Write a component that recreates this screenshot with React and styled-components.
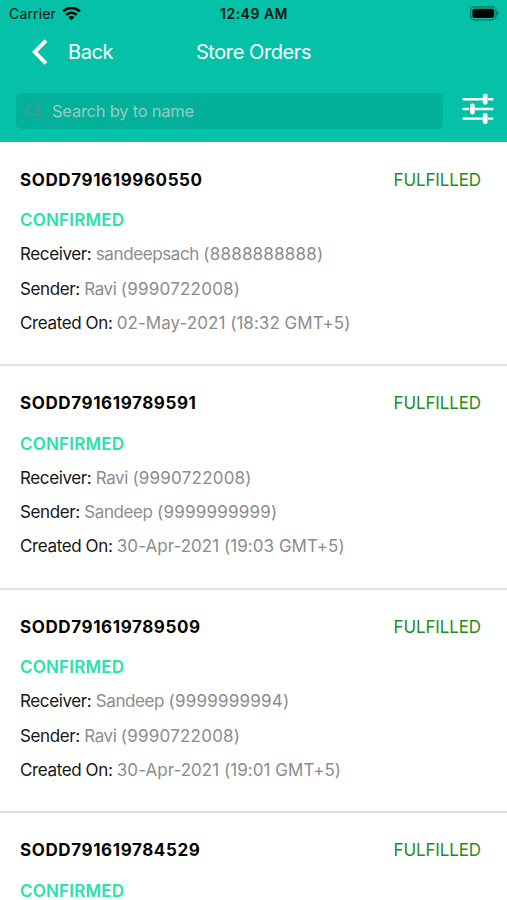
import React from "react";
import styled, { createGlobalStyle } from "styled-components";

const orders = [
  {
    id: "SODD791619960550",
    receiver: { name: "sandeepsach", phone: "8888888888" },
    sender: { name: "Ravi", phone: "9990722008" },
    created: "02-May-2021 (18:32 GMT+5)",
  },
  {
    id: "SODD791619789591",
    receiver: { name: "Ravi", phone: "9990722008" },
    sender: { name: "Sandeep", phone: "9999999999" },
    created: "30-Apr-2021 (19:03 GMT+5)",
  },
  {
    id: "SODD791619789509",
    receiver: { name: "Sandeep", phone: "9999999994" },
    sender: { name: "Ravi", phone: "9990722008" },
    created: "30-Apr-2021 (19:01 GMT+5)",
  },
  {
    id: "SODD791619784529",
  },
];

function BatteryIcon() {
  return (
    <svg width="29" height="15" viewBox="0 0 29 15">
      <rect x="0.6" y="0.8" width="25.4" height="13" rx="3.8" fill="none" stroke="#000" strokeOpacity="0.42" strokeWidth="1.2" />
      <rect x="2.4" y="2.7" width="21.8" height="9.3" rx="2" fill="#000" />
      <path d="M27.2 5v4.6c2-.7 2-3.9 0-4.6z" fill="#000" fillOpacity="0.45" />
    </svg>
  );
}

function WifiIcon() {
  return (
    <svg width="19" height="14" viewBox="0 0 19 14" fill="none" stroke="#000" strokeWidth="2.6">
      <path d="M1.2 4.4C5.8-.2 13.2-.2 17.8 4.4" />
      <path d="M4.2 7.9c3-2.9 7.6-2.9 10.6 0" />
      <path d="M9.5 13.3 6.4 10.2c1.8-1.6 4.4-1.6 6.2 0z" fill="#000" stroke="none" />
    </svg>
  );
}

function BackIcon() {
  return (
    <svg width="16" height="26" viewBox="0 0 16 26" fill="none">
      <path d="M14 1.6 2.8 13 14 24.4" stroke="#fff" strokeWidth="3.9" />
    </svg>
  );
}

function SearchIcon() {
  return (
    <svg width="18" height="18" viewBox="0 0 18 18" fill="none" stroke="#5b9488" strokeWidth="1.4">
      <circle cx="7" cy="7.6" r="5.8" />
      <path d="M11.2 11.8l5.2 5" strokeWidth="1.6" />
    </svg>
  );
}

function FilterIcon() {
  return (
    <svg width="32" height="32" viewBox="0 0 32 32" fill="#fff">
      <path
        d="M1.5 6.2H20M27 6.2h3.3M1.5 16H6M14 16h16.3M1.5 25.6H20M27 25.6h3.3"
        stroke="#fff"
        strokeWidth="2.4"
        strokeLinecap="round"
      />
      <rect x="20.8" y="0.7" width="4.8" height="11" rx="2.1" />
      <rect x="8" y="10.4" width="4.8" height="11" rx="2.1" />
      <rect x="20.8" y="20.1" width="4.8" height="11" rx="2.1" />
    </svg>
  );
}

function Contact({ label, person }) {
  return (
    <Detail>
      <Label>{label}: </Label>
      <Name>{person.name} </Name>
      <Phone>({person.phone})</Phone>
    </Detail>
  );
}

function OrderCard({ order }) {
  return (
    <Card>
      <TitleRow>
        <OrderId>{order.id}</OrderId>
        <Fulfilled>FULFILLED</Fulfilled>
      </TitleRow>
      <Confirmed>CONFIRMED</Confirmed>
      {order.receiver && (
        <>
          <Contact label="Receiver" person={order.receiver} />
          <Contact label="Sender" person={order.sender} />
          <Detail>
            <Label>Created On: </Label>
            {order.created}
          </Detail>
        </>
      )}
    </Card>
  );
}

function App() {
  return (
    <Screen>
      <GlobalStyle />
      <Header>
        <StatusBar>
          <Carrier>
            Carrier
            <WifiIcon />
          </Carrier>
          <Clock>12:49 AM</Clock>
          <Battery>
            <BatteryIcon />
          </Battery>
        </StatusBar>
        <NavBar>
          <BackButton>
            <BackIcon />
            Back
          </BackButton>
          <Title>Store Orders</Title>
        </NavBar>
        <SearchRow>
          <SearchBox>
            <SearchIcon />
            Search by to name
          </SearchBox>
          <FilterButton>
            <FilterIcon />
          </FilterButton>
        </SearchRow>
      </Header>
      {orders.map((order) => (
        <OrderCard key={order.id} order={order} />
      ))}
    </Screen>
  );
}
export default App;

const GlobalStyle = createGlobalStyle`
  body {
    margin: 0;
    overflow: hidden;
  }
  * {
    box-sizing: border-box;
  }
  svg {
    display: block;
    flex-shrink: 0;
  }
`;

const Screen = styled.div`
  width: 507px;
  height: 900px;
  overflow: hidden;
  display: flex;
  flex-direction: column;
  background-color: #fff;
  font-family: "Inter", sans-serif;
  white-space: nowrap;
`;

const Header = styled.div`
  height: 142.4px;
  flex-shrink: 0;
  background-color: #04c1a8;
`;

const StatusBar = styled.div`
  height: 27px;
  padding: 0 8px 0 9px;
  display: grid;
  grid-template-columns: 1fr auto 1fr;
  align-items: center;
  color: #05140f;
`;

const Carrier = styled.div`
  display: flex;
  align-items: center;
  gap: 6px;
  font-size: 14px;
  letter-spacing: 0.15px;
`;

const Clock = styled.div`
  font-size: 14px;
  font-weight: 600;
  letter-spacing: 0.5px;
`;

const Battery = styled.div`
  display: flex;
  justify-content: flex-end;
`;

const NavBar = styled.div`
  height: 50px;
  padding: 0 32px;
  display: grid;
  grid-template-columns: 1fr auto 1fr;
  align-items: center;
  color: #fff;
  font-size: 20px;
  letter-spacing: -0.42px;
`;

const BackButton = styled.div`
  display: flex;
  align-items: center;
  gap: 20px;
`;

const Title = styled.div`
  font-size: 20px;
`;

const SearchRow = styled.div`
  margin-top: 16px;
  padding: 0 13px 0 16px;
  display: flex;
  align-items: center;
  justify-content: space-between;
`;

const SearchBox = styled.div`
  width: 427px;
  height: 36px;
  padding-left: 10px;
  display: flex;
  align-items: center;
  gap: 8px;
  border-radius: 5px;
  background-color: #03b19a;
  color: #93cdc2;
  font-size: 16.5px;
  letter-spacing: -0.24px;
`;

const FilterButton = styled.div`
  margin-bottom: 4px;
`;

const Card = styled.div`
  height: 223.6px;
  flex-shrink: 0;
  padding: 20.3px 26px 0 20px;
  border-bottom: 2px solid #e1e1e1;
`;

const TitleRow = styled.div`
  margin-bottom: 6px;
  display: flex;
  justify-content: space-between;
  font-size: 17px;
  line-height: 34.3px;
`;

const OrderId = styled.div`
  color: #050505;
  font-size: 17px;
  font-weight: 700;
  letter-spacing: 0.6px;
`;

const Fulfilled = styled.div`
  color: #1f8d23;
  font-size: 17px;
  letter-spacing: -0.12px;
`;

const Confirmed = styled.div`
  color: #26e2ab;
  font-size: 17px;
  font-weight: 600;
  line-height: 34.3px;
  letter-spacing: 0.2px;
`;

const Detail = styled.div`
  color: #8c8c8c;
  font-size: 17px;
  line-height: 34.3px;
  letter-spacing: 0.04px;
`;

const Label = styled.span`
  color: #151515;
  letter-spacing: -0.38px;
`;

const Name = styled.span`
  letter-spacing: -0.4px;
`;

const Phone = styled.span`
  letter-spacing: 0.22px;
`;
